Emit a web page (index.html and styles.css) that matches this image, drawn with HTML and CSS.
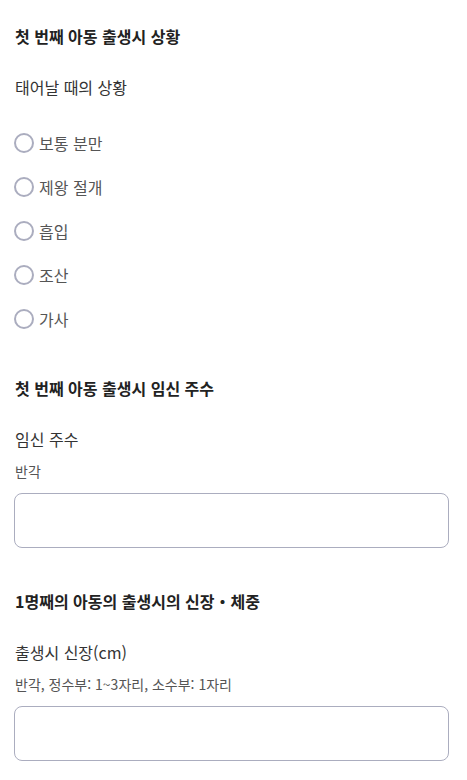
FILE: index.html
```html
<!DOCTYPE html>
<html lang="ko">
<head>
<meta charset="utf-8">
<link rel="stylesheet" href="styles.css">
</head>
<body>
<div class="page">
  <section class="section">
    <h2 class="section-title">첫 번째 아동 출생시 상황</h2>
    <div class="field">
      <div class="label">태어날 때의 상황</div>
      <div class="radios">
        <label class="radio"><span class="circle"></span><span class="radio-text">보통 분만</span></label>
        <label class="radio"><span class="circle"></span><span class="radio-text">제왕 절개</span></label>
        <label class="radio"><span class="circle"></span><span class="radio-text">흡입</span></label>
        <label class="radio"><span class="circle"></span><span class="radio-text">조산</span></label>
        <label class="radio"><span class="circle"></span><span class="radio-text">가사</span></label>
      </div>
    </div>
  </section>
  <section class="section">
    <h2 class="section-title">첫 번째 아동 출생시 임신 주수</h2>
    <div class="field">
      <div class="label">임신 주수</div>
      <div class="hint">반각</div>
      <div class="input"></div>
    </div>
  </section>
  <section class="section">
    <h2 class="section-title">1명째의 아동의 출생시의 신장・체중</h2>
    <div class="field">
      <div class="label">출생시 신장(cm)</div>
      <div class="hint">반각, 정수부: 1~3자리, 소수부: 1자리</div>
      <div class="input"></div>
    </div>
  </section>
</div>
</body>
</html>
```

FILE: styles.css
```css
* { box-sizing: border-box; }
html, body { margin: 0; padding: 0; background: #fff; }
body {
  font-family: "Noto Sans CJK KR", "Noto Sans", sans-serif;
  color: #333;
}
.page {
  padding: 25px 18px 0 14px;
}
.section-title {
  margin: 0;
  padding-left: 1px;
  font-size: 16px;
  line-height: 22px;
  font-weight: 700;
  color: #222;
}
.field {
  margin-top: 28px;
}
.label {
  padding-left: 1px;
  font-size: 16px;
  line-height: 24px;
  color: #333;
}
.radios {
  margin-top: 22px;
  display: flex;
  flex-direction: column;
}
.radio {
  display: flex;
  align-items: center;
  height: 44px;
}
.circle {
  width: 20px;
  height: 20px;
  border: 2px solid #abadbf;
  border-radius: 50%;
  flex: none;
}
.radio-text {
  margin-left: 5px;
  font-size: 16px;
  line-height: 24px;
  color: #555;
}
.section + .section { margin-top: 36px; }
.section:nth-child(3) { margin-top: 42px; }
.hint {
  margin-top: 10px;
  padding-left: 1px;
  font-size: 14px;
  line-height: 20px;
  color: #555;
}
.input {
  margin-top: 12px;
  height: 55px;
  border: 1px solid #abadbf;
  border-radius: 8px;
  background: #fff;
}
```
